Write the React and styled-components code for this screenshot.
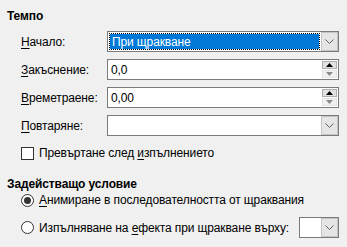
import React from 'react';
import styled, { createGlobalStyle } from 'styled-components';

const GlobalStyle = createGlobalStyle`
	html, body {
		margin: 0;
		background: #f0f0f0;
	}
	body {
		font-family: "Liberation Sans", Arial, sans-serif;
		font-size: 12px;
		letter-spacing: -0.12px;
		color: #000;
	}
`;

const Page = styled.div`
	width: 347px;
	height: 247px;
	box-sizing: border-box;
	padding: 0 8px 0 7px;
	display: flex;
	flex-direction: column;
`;

const Title = styled.div`
	font-weight: bold;
	line-height: 16px;
	margin-top: ${(p) => p.$top}px;
`;

const FormGrid = styled.div`
	display: grid;
	grid-template-columns: 86px 232px;
	grid-auto-rows: 21px;
	row-gap: 7px;
	margin: 7px 0 0 14px;
	align-items: center;
`;

const Label = styled.label`
	line-height: 16px;
	u {
		text-decoration: underline;
		text-underline-offset: 2px;
	}
`;

const Field = styled.div`
	height: 21px;
	box-sizing: border-box;
	border: 1px solid #7a7a7a;
	background: #fff;
	display: flex;
	align-items: stretch;
	flex-shrink: 0;
	width: ${(p) => (p.$width ? `${p.$width}px` : 'auto')};
`;

const Value = styled.div`
	flex: 1;
	display: flex;
	align-items: center;
	padding-left: 3px;
	line-height: 16px;
`;

const Selected = styled.div`
	flex: 1;
	margin: 1px;
	display: flex;
	align-items: center;
	padding-left: 2px;
	color: #fff;
	border: 1px dotted #000;
	background-color: #0078d7;
	background-clip: padding-box;
`;

const DropButton = styled.div`
	width: 17px;
	box-sizing: border-box;
	background: #e5e5e5;
	border: 1px solid #c4c4c4;
	display: flex;
	align-items: center;
	justify-content: center;
`;

const Spin = styled.div`
	width: 15px;
	margin: 1px 1px 1px 0;
	display: flex;
	flex-direction: column;
	gap: 1px;
`;

const SpinBtn = styled.div`
	flex: 1;
	display: flex;
	align-items: center;
	justify-content: center;
	background: ${(p) => (p.$active ? '#e1e1e1' : '#f0f0f0')};
	border: 1px solid ${(p) => (p.$active ? '#adadad' : '#e3e3e3')};
`;

const CheckRow = styled.div`
	display: flex;
	align-items: center;
	gap: 5px;
	height: 16px;
	margin: ${(p) => p.$top}px 0 0 14px;
	line-height: 16px;
	white-space: nowrap;
	u {
		text-underline-offset: 2px;
	}
`;

const Box = styled.span`
	width: 13px;
	height: 13px;
	flex-shrink: 0;
	box-sizing: border-box;
	border: 1px solid #333;
	background: #fff;
`;

const Radio = styled.span`
	width: 13px;
	height: 13px;
	flex-shrink: 0;
	box-sizing: border-box;
	border: 1px solid #333;
	border-radius: 50%;
	background: #fff;
	display: flex;
	align-items: center;
	justify-content: center;
	&::after {
		content: '';
		width: 7px;
		height: 7px;
		border-radius: 50%;
		background: ${(p) => (p.$checked ? '#333' : 'transparent')};
	}
`;

const RadioRow = styled(CheckRow)`
	height: ${(p) => p.$height || 16}px;
`;

const Spacer = styled.div`
	flex: 1;
`;

const Chevron = () => (
	<svg width="9" height="5" viewBox="0 0 9 5">
		<polyline points="0.5,0.5 4.5,4.5 8.5,0.5" fill="none" stroke="#606060" strokeWidth="1" />
	</svg>
);

const Arrow = ({ up, color }) => (
	<svg width="7" height="4" viewBox="0 0 7 4">
		<polygon points={up ? '0,4 3.5,0 7,4' : '0,0 3.5,4 7,0'} fill={color} />
	</svg>
);

const SpinField = ({ value }) => (
	<Field>
		<Value>{value}</Value>
		<Spin>
			<SpinBtn $active>
				<Arrow up color="#000" />
			</SpinBtn>
			<SpinBtn>
				<Arrow color="#8a8a8a" />
			</SpinBtn>
		</Spin>
	</Field>
);

export default function App() {
	return (
		<>
			<GlobalStyle />
			<Page>
				<Title $top={8}>Темпо</Title>
				<FormGrid>
					<Label>
						<u>Н</u>ачало:
					</Label>
					<Field>
						<Selected>При щракване</Selected>
						<DropButton>
							<Chevron />
						</DropButton>
					</Field>
					<Label>
						<u>З</u>акъснение:
					</Label>
					<SpinField value="0,0" />
					<Label>
						<u>В</u>реметраене:
					</Label>
					<SpinField value="0,00" />
					<Label>
						<u>П</u>овтаряне:
					</Label>
					<Field>
						<Value />
						<DropButton>
							<Chevron />
						</DropButton>
					</Field>
				</FormGrid>
				<CheckRow $top={9}>
					<Box />
					<span>
						Превъртане след <u>и</u>зпълнението
					</span>
				</CheckRow>
				<Title $top={15}>Задействащо условие</Title>
				<RadioRow $top={0}>
					<Radio $checked />
					<span>
						<u>А</u>нимиране в последователността от щраквания
					</span>
				</RadioRow>
				<RadioRow $top={9} $height={21}>
					<Radio />
					<span>
						Изпълняване на <u>е</u>фекта при щракване върху:
					</span>
					<Spacer />
					<Field $width={40}>
						<Value />
						<DropButton>
							<Chevron />
						</DropButton>
					</Field>
				</RadioRow>
			</Page>
		</>
	);
}
